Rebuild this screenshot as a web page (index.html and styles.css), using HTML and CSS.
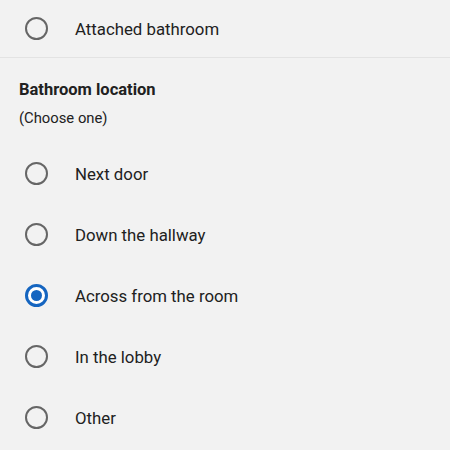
FILE: index.html
```html
<!DOCTYPE html>
<html>
<head>
    <meta charset="UTF-8">
    <meta name="viewport" content="width=device-width, initial-scale=1.0">
    <title>Bathroom</title>
    <link rel="stylesheet" href="styles.css">
</head>
<body>
    <div class="option option-top">
        <span class="radio"></span>
        <span class="label">Attached bathroom</span>
    </div>

    <div class="section">
        <div class="section-title">Bathroom location</div>
        <div class="section-hint">(Choose one)</div>
    </div>

    <div class="options">
        <div class="option">
            <span class="radio"></span>
            <span class="label">Next door</span>
        </div>
        <div class="option">
            <span class="radio"></span>
            <span class="label">Down the hallway</span>
        </div>
        <div class="option">
            <span class="radio checked"></span>
            <span class="label">Across from the room</span>
        </div>
        <div class="option">
            <span class="radio"></span>
            <span class="label">In the lobby</span>
        </div>
        <div class="option">
            <span class="radio"></span>
            <span class="label">Other</span>
        </div>
    </div>
</body>
</html>
```

FILE: styles.css
```css
body {
    margin: 0;
    background-color: #f2f2f2;
    color: #212121;
    font-family: Roboto, "Noto Sans", sans-serif;
}

.option {
    display: flex;
    align-items: center;
    height: 61px;
    padding-left: 25px;
    gap: 27px;
}

.option-top {
    height: 57px;
    border-bottom: 1px solid #e3e3e3;
}

.options {
    margin-top: 15px;
}

.radio {
    width: 19px;
    height: 19px;
    border: 2px solid #666;
    border-radius: 50%;
    display: flex;
    align-items: center;
    justify-content: center;
    flex-shrink: 0;
}

.radio.checked {
    width: 17px;
    height: 17px;
    border: 3px solid #1565c0;
    background-color: #fff;
}

.radio.checked::after {
    content: "";
    width: 11px;
    height: 11px;
    border-radius: 50%;
    background-color: #1565c0;
}

.label {
    font-size: 16.8px;
}

.section {
    padding: 21px 19px 0;
}

.section-title {
    font-size: 16.5px;
    font-weight: 700;
    line-height: 22px;
}

.section-hint {
    font-size: 14.8px;
    line-height: 20px;
    margin-top: 7px;
}
```
